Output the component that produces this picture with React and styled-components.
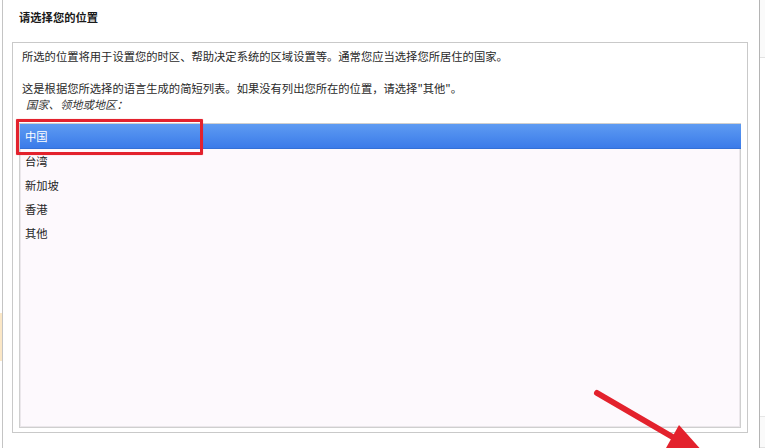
import styled, { createGlobalStyle } from 'styled-components';

const GlobalStyle = createGlobalStyle`
  html, body {
    margin: 0;
    padding: 0;
    background: #ffffff;
    overflow: hidden;
  }
  body {
    font-family: "Noto Sans CJK SC", "Noto Sans", sans-serif;
  }
`;

const Frame = styled.div`
  position: relative;
  display: flex;
  width: 765px;
  height: 448px;
  background: #ffffff;
`;

const LeftEdge = styled.div`
  position: relative;
  width: 2px;
  border-right: 1px solid #c4c4c4;
`;

const Tab = styled.div`
  position: absolute;
  left: 0;
  top: 313px;
  width: 2px;
  height: 48px;
  background: #fbe7c6;
`;

const RightEdge = styled.div`
  display: flex;
  flex-direction: column;
  width: 5px;
  border-left: 1px solid #b4b4b4;
`;

const EdgeCap = styled.div`
  height: ${(p) => p.$h}px;
  background: ${(p) => p.$bg};
  border-bottom: 1px solid #e2e2e2;
`;

const EdgeFill = styled.div`
  flex: 1;
  background: #ffffff;
  border-bottom: 1px solid #e6e6e6;
`;

const Main = styled.main`
  flex: 1;
  display: flex;
  flex-direction: column;
  padding: 10px 11px 15px 9px;
  min-width: 0;
`;

const Title = styled.h1`
  margin: 0 0 18px 7px;
  font-size: 11.3px;
  line-height: 14px;
  font-weight: 700;
  color: #1a1a1a;
`;

const Box = styled.section`
  position: relative;
  flex: 1;
  display: flex;
  flex-direction: column;
  border: 1px solid #c9c9c9;
  padding: 5px 6px 4px 6px;
`;

const Para = styled.p`
  margin: 0 0 ${(p) => p.$gap}px 3px;
  font-size: 11.3px;
  line-height: 16px;
  color: #2a2a2a;
`;

const Label = styled.p`
  margin: 0 0 11px 7px;
  font-size: 11.3px;
  line-height: 16px;
  font-style: italic;
  color: #333333;
`;

const List = styled.ul`
  flex: 1;
  margin: 0;
  padding: 0;
  list-style: none;
  background: #fdf9fd;
  border: 1px solid #cfcfcf;
  box-shadow: inset 0 0 0 1px #ebe7eb;
`;

const Row = styled.li`
  height: 24px;
  display: flex;
  align-items: center;
  padding-left: 5px;
  font-size: 11.3px;
  color: ${(p) => (p.$selected ? '#ffffff' : '#262626')};
  background: ${(p) =>
    p.$selected ? 'linear-gradient(#5e9bf2, #3b7be9)' : 'transparent'};
  border-bottom: ${(p) => (p.$selected ? '1px solid #3470d6' : 'none')};
  margin: ${(p) => (p.$selected ? '0 -1px 0 0' : '0')};
`;

const Highlight = styled.div`
  position: absolute;
  left: 3px;
  top: 76px;
  width: 181px;
  height: 30px;
  border: 3px solid #e3222d;
  border-radius: 1px;
  box-shadow: 0 0 1px rgba(227, 34, 45, 0.6);
  pointer-events: none;
`;

const Arrow = styled.svg`
  position: absolute;
  left: 0;
  top: 0;
  pointer-events: none;
`;

const countries = ['中国', '台湾', '新加坡', '香港', '其他'];

export default function App() {
  return (
    <>
      <GlobalStyle />
      <Frame>
        <LeftEdge>
          <Tab />
        </LeftEdge>
        <Main>
          <Title>请选择您的位置</Title>
          <Box>
            <Para $gap={16}>
              所选的位置将用于设置您的时区、帮助决定系统的区域设置等。通常您应当选择您所居住的国家。
            </Para>
            <Para $gap={0}>
              这是根据您所选择的语言生成的简短列表。如果没有列出您所在的位置，请选择"其他"。
            </Para>
            <Label>国家、领地或地区：</Label>
            <List>
              {countries.map((c, i) => (
                <Row key={c} $selected={i === 0}>
                  {c}
                </Row>
              ))}
            </List>
            <Highlight />
          </Box>
        </Main>
        <RightEdge>
          <EdgeCap $h={57} $bg="#fafafa" />
          <EdgeFill />
          <EdgeCap $h={30} $bg="#fafafa" />
        </RightEdge>
        <Arrow width="765" height="448" viewBox="0 0 765 448">
          <line
            x1="597"
            y1="393"
            x2="676"
            y2="439"
            stroke="#e3222d"
            strokeWidth="6"
            strokeLinecap="round"
          />
          <polygon points="679,425 666,448 712,462" fill="#e3222d" />
        </Arrow>
      </Frame>
    </>
  );
}
